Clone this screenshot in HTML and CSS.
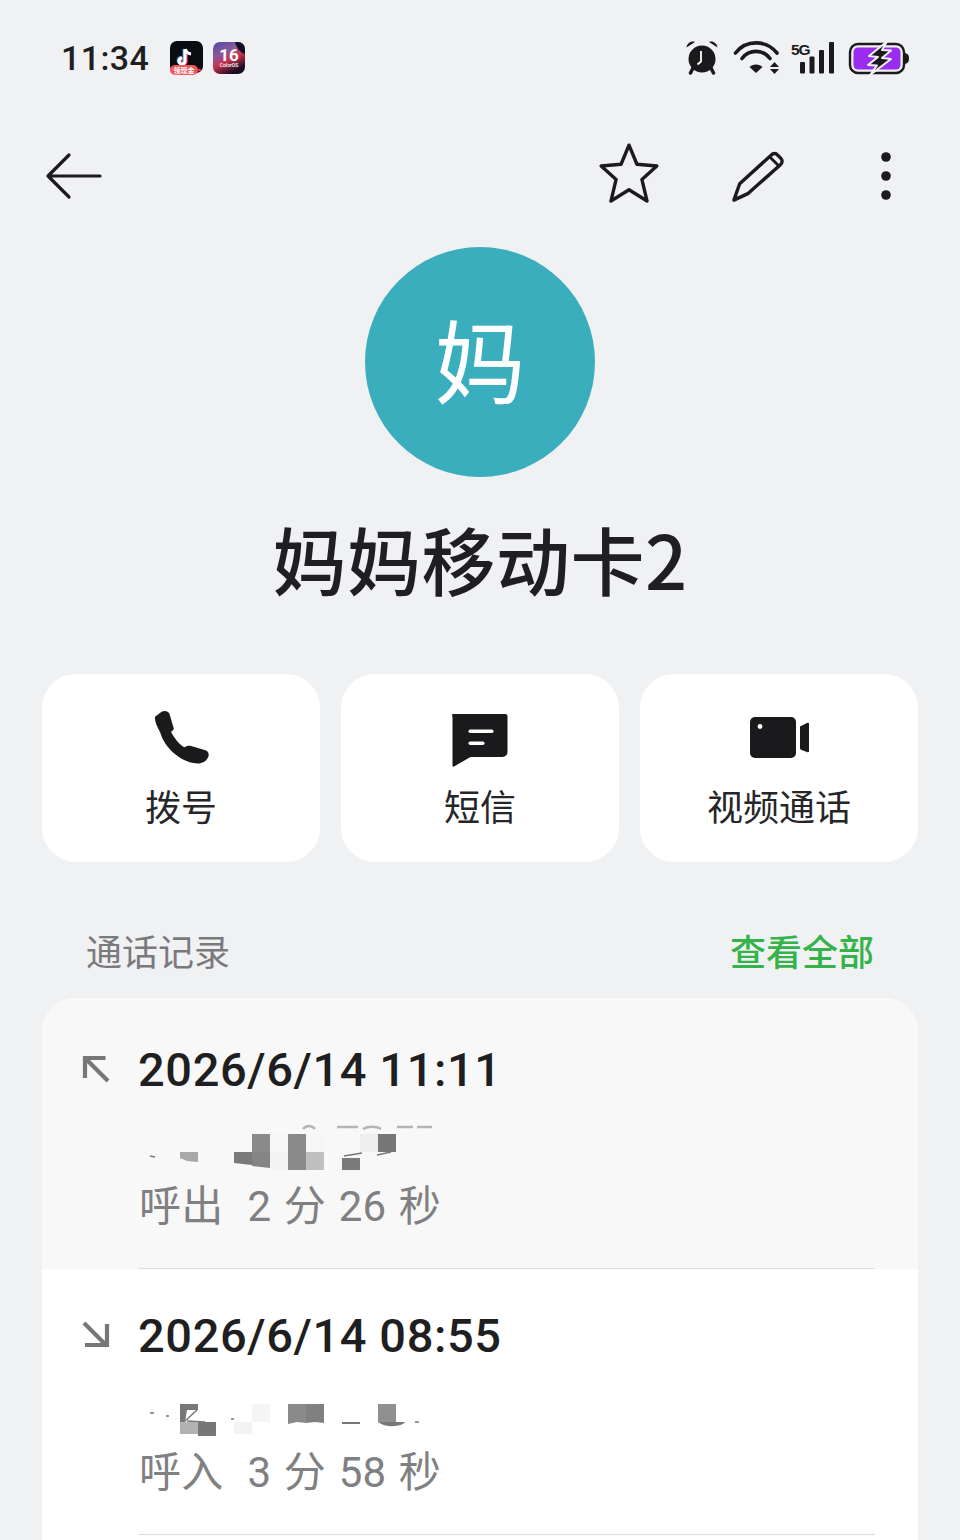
FILE: index.html
```html
<!DOCTYPE html>
<html lang="zh-CN">
<head>
<meta charset="utf-8">
<title>妈妈移动卡2</title>
<link rel="stylesheet" href="styles.css">
</head>
<body>
<div class="page">
  <header class="status">
    <div class="status-left">
      <span class="time">11:34</span>
      <svg class="app" width="34" height="34" viewBox="0 0 34 34">
        <rect width="33" height="32" rx="7" fill="#0b0b12"/>
        <path d="M15 8.500v11.500a3 3 0 1 1-3-3" fill="none" stroke="#ff4466" stroke-width="3.200" transform="translate(1 .6)"/>
        <path d="M15 8.500v11.500a3 3 0 1 1-3-3" fill="none" stroke="#4ae" stroke-width="3.200" transform="translate(-.8 -.4)"/>
        <path d="M15.500 8c.5 3 2.500 4.500 5.500 5" fill="none" stroke="#fff" stroke-width="3"/>
        <path d="M15 8.500v11.500a3 3 0 1 1-3-3" fill="none" stroke="#fff" stroke-width="3"/>
        <rect x="0" y="24" width="28" height="10" rx="5" fill="#f0565f"/>
        <text x="14" y="32" class="tiny">领现金</text>
        <circle cx="29.500" cy="29" r="1.500" fill="#e33"/>
      </svg>
      <svg class="app app-os" width="33" height="33" viewBox="0 0 33 33">
        <defs>
          <linearGradient id="os" x1="0" y1="0" x2=".5" y2="1">
            <stop offset="0" stop-color="#4d45b0"/>
            <stop offset=".4" stop-color="#8a5a9a"/>
            <stop offset=".65" stop-color="#c8344e"/>
            <stop offset="1" stop-color="#1e0c26"/>
          </linearGradient>
        </defs>
        <rect width="32" height="32" rx="7" fill="url(#os)"/>
        <path d="M22 0h3a7 7 0 0 1 7 7v5c-5-1-8-6-10-12z" fill="#120d22"/>
        <text x="16" y="19" class="os16">16</text>
        <text x="16" y="25" class="osname">ColorOS</text>
      </svg>
    </div>
    <div class="status-right">
      <svg class="ic-alarm" width="36" height="36" viewBox="0 0 36 36">
        <path d="M2.500 8.500C3 4.500 7 1.500 11 3zM33.500 8.500C33 4.500 29 1.500 25 3z" fill="#1a1a1c"/>
        <path d="M9 29l-2.500 5M27 29l2.500 5" stroke="#1a1a1c" stroke-width="3.500" stroke-linecap="round"/>
        <circle cx="18" cy="20" r="13.500" fill="#1a1a1c"/>
        <path d="M17 12v10.500l-3.500 3" fill="none" stroke="#fff" stroke-width="1.800"/>
      </svg>
      <svg width="50" height="36" viewBox="0 -1 50 36">
        <path d="M3.500 13C14-.5 34-.5 45 13" fill="none" stroke="#1a1a1c" stroke-width="3.600" stroke-linecap="round"/>
        <path d="M10 18.500C17 9 31 9 38 18.500" fill="none" stroke="#1a1a1c" stroke-width="3.600" stroke-linecap="round"/>
        <path d="M17.500 27c3-3.500 10-3.500 13 0l-6.500 6z" fill="#1a1a1c"/>
        <path d="M38 27l4.500-5 4.500 5zM38 29h9l-4.500 5z" fill="#1a1a1c"/>
      </svg>
      <svg class="ic-signal" width="44" height="34" viewBox="0 0 44 34">
        <text x="0" y="15" class="fiveg">5G</text>
        <rect x="9" y="22" width="5" height="11.500" rx="1" fill="#1a1a1c"/>
        <rect x="18.500" y="16.500" width="5" height="17" rx="1" fill="#1a1a1c"/>
        <rect x="28" y="10" width="5" height="23.500" rx="1" fill="#1a1a1c"/>
        <rect x="38" y="2" width="5" height="31.500" rx="1" fill="#1a1a1c"/>
      </svg>
      <svg width="62" height="36" viewBox="0 0 62 36">
        <rect x="2" y="5" width="54" height="29" rx="8" fill="none" stroke="#1a1a1c" stroke-width="2.400"/>
        <rect x="5.500" y="8.500" width="47" height="22" rx="4.500" fill="#9a2cf0"/>
        <path d="M57 14c3 .5 4 2.500 4 5.500s-1 5-4 5.500z" fill="#1a1a1c"/>
        <path d="M39 2.500L21 17l9 1-10 8 9 .5-7 9.500 21-16-9-1 9-7.500-9-.5z" fill="#1a1a1c" stroke="#f0f1f3" stroke-width="2" stroke-linejoin="round"/>
      </svg>
    </div>
  </header>

  <nav class="toolbar">
    <svg width="60" height="50" viewBox="0 0 60 50">
      <path d="M4 25h52M25 4L4 25l21 21" fill="none" stroke="#1b1b1d" stroke-width="3.200" stroke-linecap="round" stroke-linejoin="round"/>
    </svg>
    <div class="toolbar-right">
      <svg class="ic-star" width="66" height="62" viewBox="0 0 64 60">
        <path d="M32 3l7.700 18.500 19.300 1.700-14.500 13 5 21-17.500-11-17.500 11 5-21L5 23.200l19.300-1.700z" fill="none" stroke="#1b1b1d" stroke-width="3.300" stroke-linejoin="round"/>
      </svg>
      <svg class="ic-pencil" width="54" height="54" viewBox="0 0 56 56">
        <path d="M3 53l6-17L41.500 6.500c2.500-2.500 5-2.500 7 0l3 3c2 2 2 4.500 0 6.500L18 46z" fill="none" stroke="#1b1b1d" stroke-width="3.500" stroke-linejoin="round"/>
        <path d="M40 8l10.500 10.500" fill="none" stroke="#1b1b1d" stroke-width="3"/>
      </svg>
      <svg width="12" height="52" viewBox="0 0 12 52">
        <circle cx="6" cy="7" r="4.800" fill="#1b1b1d"/>
        <circle cx="6" cy="26" r="4.800" fill="#1b1b1d"/>
        <circle cx="6" cy="45" r="4.800" fill="#1b1b1d"/>
      </svg>
    </div>
  </nav>

  <section class="profile">
    <div class="avatar">妈</div>
    <h1 class="name">妈妈移动卡2</h1>
  </section>

  <section class="actions">
    <div class="action">
      <svg width="60" height="60" viewBox="0 0 60 60">
        <path d="M4 8.700L11 3.500c3-1.300 6-.5 7.300 1.800l4.400 15c.2 1.500-1 2.500-2.700 3.400 3 6 7.500 12 13.300 15.600 2-1.300 4.500-2 6.700-1.300l14.500 4.200c2.700 1 3.800 3.500 3 6-1 3-3.700 6.700-9.700 7.200C32 56 14 41 9.500 25.300 7.500 20 3.500 15 4 8.700z" fill="#1a1a1c"/>
      </svg>
      <span>拨号</span>
    </div>
    <div class="action">
      <svg width="60" height="60" viewBox="2.500 0 60 60">
        <path d="M5 6h53a2 2 0 0 1 2 2v36a5 5 0 0 1-5 5H23L6.500 58.500c-1 .5-1.500 0-1.500-1V9a3 3 0 0 1 0-3z" fill="#1a1a1c"/>
        <rect x="21" y="21.500" width="25" height="3.400" rx="1.700" fill="#fff"/>
        <rect x="21" y="33.500" width="16" height="3.400" rx="1.700" fill="#fff"/>
      </svg>
      <span>短信</span>
    </div>
    <div class="action">
      <svg width="60" height="60" viewBox="-1 0 60 60">
        <rect x="0" y="9" width="46" height="41" rx="5" fill="#1a1a1c"/>
        <circle cx="10" cy="18.500" r="2.400" fill="#fff"/>
        <path d="M50 18.500l7-3.500c1.500-.5 2.500 0 2.500 1.500v26c0 1.500-1 2-2.500 1.500l-5.500-2c-1-.5-1.500-1-1.500-2z" fill="#1a1a1c"/>
      </svg>
      <span>视频通话</span>
    </div>
  </section>

  <div class="section-head">
    <span class="section-title">通话记录</span>
    <span class="section-link">查看全部</span>
  </div>

  <section class="log">
    <article class="call call-first">
      <svg class="dir" width="28" height="28" viewBox="0 0 28 28">
        <path d="M1 3h22.500M3 1v22M3 3l23 23" fill="none" stroke="#777" stroke-width="4.200"/>
      </svg>
      <div class="call-body">
        <div class="call-date">2026/6/14 11:11</div>
        <svg class="mosaic" width="300" height="68" viewBox="0 0 300 68">
          <path d="M164 19c3-4 9-4 12 0M198 17h21M224 19c5-3 14-3 18 0M258 17h16M278 17h15" fill="none" stroke="#b5b5b5" stroke-width="2.500"/>
          <rect x="113" y="24" width="18" height="18" fill="#8a8a8a"/>
          <rect x="149" y="24" width="18" height="18" fill="#8a8a8a"/>
          <rect x="131" y="24" width="18" height="18" fill="#f6f6f6"/>
          <rect x="167" y="24" width="18" height="18" fill="#f6f6f6"/>
          <path d="M95 42h18v13l-18-2z" fill="#7a7a7a"/>
          <path d="M113 42h18v16l-18-2z" fill="#858585"/>
          <rect x="131" y="42" width="18" height="17" fill="#f3f3f3"/>
          <rect x="149" y="42" width="18" height="18" fill="#8a8a8a"/>
          <rect x="167" y="42" width="18" height="18" fill="#c0c0c0"/>
          <rect x="203" y="48" width="18" height="12" fill="#7a7a7a"/>
          <rect x="221" y="24" width="18" height="18" fill="#eeeeee"/>
          <rect x="239" y="24" width="18" height="18" fill="#777777"/>
          <path d="M41 42h18v10l-11-1-7-3z" fill="#a8a8a8"/>
          <path d="M11 46l5 1M205 46l18-3M238 45l14-3" fill="none" stroke="#777" stroke-width="1.500"/>
        </svg>
        <div class="call-meta"><span class="kind">呼出</span><span>2 分 26 秒</span></div>
      </div>
    </article>
    <article class="call">
      <svg class="dir" width="28" height="28" viewBox="0 0 28 28">
        <path d="M2 2l23 23M3 24h24M25 3v23" fill="none" stroke="#777" stroke-width="4.200"/>
      </svg>
      <div class="call-body">
        <div class="call-date">2026/6/14 08:55</div>
        <svg class="mosaic" width="300" height="68" viewBox="0 0 300 68">
          <path d="M41 28h18v6H48l-2 12h-5z" fill="#777"/>
          <path d="M46 45l12-11M48 45l18 1" fill="none" stroke="#777" stroke-width="1.500"/>
          <rect x="41" y="46" width="18" height="12" fill="#b2b2b2"/>
          <rect x="59" y="46" width="18" height="14" fill="#777"/>
          <rect x="113" y="28" width="18" height="18" fill="#f5f5f5"/>
          <rect x="95" y="46" width="18" height="12" fill="#f3f3f3"/>
          <path d="M149 28h18v19l-9-1-9 2z" fill="#8a8a8a"/>
          <path d="M167 28h18v19l-9-1-9 1z" fill="#808080"/>
          <rect x="203" y="46" width="18" height="2" fill="#777"/>
          <rect x="239" y="28" width="18" height="18" fill="#909090"/>
          <path d="M239 46h27c-3 5-20 6-27 0z" fill="#777"/>
          <path d="M11 37h4M27 40h3M92 43h3M276 46h4" fill="none" stroke="#777" stroke-width="1.500"/>
        </svg>
        <div class="call-meta"><span class="kind">呼入</span><span>3 分 58 秒</span></div>
      </div>
    </article>
  </section>
</div>
</body>
</html>
```

FILE: styles.css
```css
* { box-sizing: border-box; }
html, body { margin: 0; padding: 0; }
body {
  background: #f0f1f3;
  font-family: "Noto Sans CJK SC", "Noto Sans", sans-serif;
  color: #1b1b1d;
}
svg { display: block; flex: none; }
.page { width: 960px; height: 1540px; overflow: hidden; }

.status {
  height: 116px;
  padding: 0 50px 0 61px;
  display: flex;
  justify-content: space-between;
  align-items: center;
}
.status-left { display: flex; align-items: center; }
.status-left .app { margin-left: 10px; }
.status-left .app-os { margin-left: 9px; }
.time {
  font-family: Roboto, sans-serif;
  font-weight: 500;
  font-size: 34px;
  line-height: 40px;
  width: 99px;
  letter-spacing: .4px;
  color: #1f1f21;
}
.status-right { display: flex; align-items: center; gap: 9px; margin-top: -2px; }
.ic-alarm { margin-right: 3px; }
.ic-signal { margin-right: 4px; }
.tiny { font: 700 7px "Noto Sans CJK SC", sans-serif; fill: #fff; text-anchor: middle; }
.os16 { font: 700 17px Roboto, sans-serif; fill: #fff; text-anchor: middle; }
.osname { font: 500 5px Roboto, sans-serif; fill: #fff; text-anchor: middle; }
.fiveg { font: 700 15.500px "Liberation Sans", sans-serif; fill: #1a1a1c; letter-spacing: -1px; }

.toolbar {
  height: 120px;
  padding: 0 68px 0 44px;
  display: flex;
  justify-content: space-between;
  align-items: center;
}
.toolbar-right { display: flex; align-items: center; gap: 71px; }
.ic-star { margin: 0 -2px 6px 0; }
.ic-pencil { margin-right: 24px; }

.profile { display: flex; flex-direction: column; align-items: center; }
.avatar {
  width: 230px;
  height: 230px;
  margin-top: 11px;
  border-radius: 50%;
  background: #3aaebd;
  color: #fff;
  font-size: 91px;
  line-height: 220px;
  text-align: center;
}
.name {
  margin: 26px 0 0;
  font-size: 74px;
  font-weight: 500;
  line-height: 110px;
  letter-spacing: .5px;
  color: #1f1f21;
}

.actions {
  margin-top: 61px;
  padding: 0 42px;
  display: grid;
  grid-template-columns: repeat(3, 1fr);
  gap: 21px;
}
.action {
  height: 188px;
  padding-top: 34px;
  background: #fff;
  border-radius: 34px;
  display: flex;
  flex-direction: column;
  align-items: center;
}
.action span {
  margin-top: 10px;
  font-size: 36px;
  line-height: 54px;
  color: #262628;
}

.section-head {
  margin-top: 61px;
  height: 54px;
  padding: 0 86px;
  display: flex;
  justify-content: space-between;
  align-items: center;
  font-size: 36px;
  line-height: 54px;
}
.section-title { color: #7a7a7c; }
.section-link { color: #35b34a; font-weight: 500; }

.log {
  margin: 21px 42px 0;
  padding-bottom: 30px;
  background: #fff;
  border-radius: 34px 34px 0 0;
  overflow: hidden;
}
.call { display: flex; padding: 39px 43px 0 40px; }
.call-first {
  padding-top: 44px;
  background: #f8f8f8;
}
.dir { margin: 13px 29px 0 0; }
.call-body {
  flex: 1;
  height: 227px;
  border-bottom: 1px solid #dcdcdc;
}
.call-date {
  font-family: Roboto, sans-serif;
  font-weight: 500;
  font-size: 47px;
  line-height: 56px;
  letter-spacing: .6px;
  margin-left: -1px;
  color: #1f1f21;
}
.mosaic { margin-top: 12px; }
.call-meta {
  display: flex;
  gap: 24px;
  font-family: Roboto, "Noto Sans CJK SC", sans-serif;
  font-size: 42px;
  line-height: 58px;
  word-spacing: 2px;
  letter-spacing: .2px;
  color: #808082;
}
```
